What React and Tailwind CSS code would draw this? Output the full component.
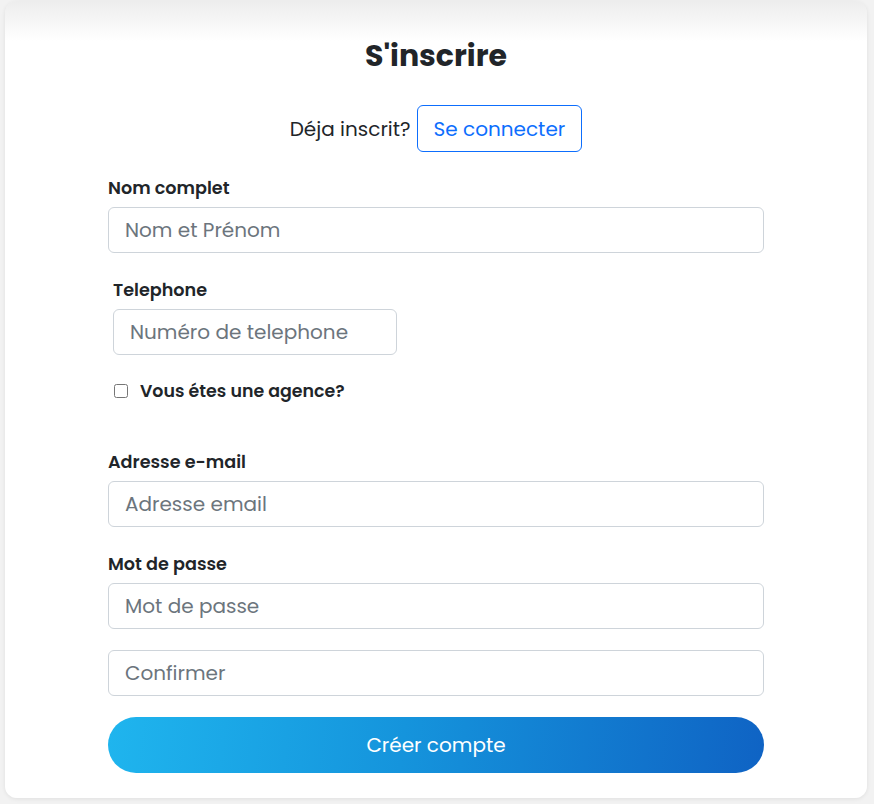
import { useState } from 'react'

const Field = ({ label, placeholder, type = 'text', className = '' }) => (
  <div className={className}>
    {label && <label className="block text-[17.6px] leading-6 font-semibold text-[#212529] mb-[7px]">{label}</label>}
    <input
      type={type}
      placeholder={placeholder}
      className="w-full h-[46px] px-4 text-[20px] text-[#212529] placeholder:text-[#6c757d] bg-white border border-[#ced4da] rounded-[6px] outline-none"
    />
  </div>
)

const App = () => {
  const [agency, setAgency] = useState(false)

  return (
    <div className="min-h-[804px] bg-[#f2f2f2] pt-px pb-[6px]" style={{ fontFamily: 'Poppins, Inter, "Noto Sans", sans-serif' }}>
      <div className="ml-[5px] w-[862px] rounded-xl bg-gradient-to-b from-[#ededed] via-white via-[5%] to-white shadow-[0_1px_4px_rgba(0,0,0,0.08)] pt-[37px] pb-[25px]">
        <h1 className="text-center text-[30px] leading-[36px] font-bold text-[#212529]">S'inscrire</h1>

        <div className="mt-[31px] flex items-center justify-center gap-[6px]">
          <span className="text-[20px] text-[#212529]">Déja inscrit?</span>
          <button className="h-[47px] px-4 text-[20px] text-[#0d6efd] border border-[#0d6efd] rounded-[6px] bg-white">
            Se connecter
          </button>
        </div>

        <form className="w-[656px] mx-auto mt-[24px]" onSubmit={(e) => e.preventDefault()}>
          <Field label="Nom complet" placeholder="Nom et Prénom" />

          <div className="px-[5px] mt-[25px]">
            <Field label="Telephone" placeholder="Numéro de telephone" type="tel" className="w-[284px]" />
            <label className="mt-[24px] flex items-center gap-3 h-6">
              <input
                type="checkbox"
                checked={agency}
                onChange={() => setAgency(!agency)}
                className="w-[14px] h-[14px] ml-px"
              />
              <span className="text-[17.4px] font-semibold text-[#212529]">Vous étes une agence?</span>
            </label>
          </div>

          <Field label="Adresse e-mail" placeholder="Adresse email" type="email" className="mt-[47px]" />
          <Field label="Mot de passe" placeholder="Mot de passe" type="password" className="mt-[25px]" />
          <Field placeholder="Confirmer" type="password" className="mt-[21px]" />

          <button
            type="submit"
            className="mt-[21px] w-full h-[56px] rounded-full bg-[linear-gradient(97deg,#1fb5ee_0%,#1594dc_45%,#0f63c4_100%)] text-white text-[20px]"
          >
            Créer compte
          </button>
        </form>
      </div>
    </div>
  )
}

export default App
